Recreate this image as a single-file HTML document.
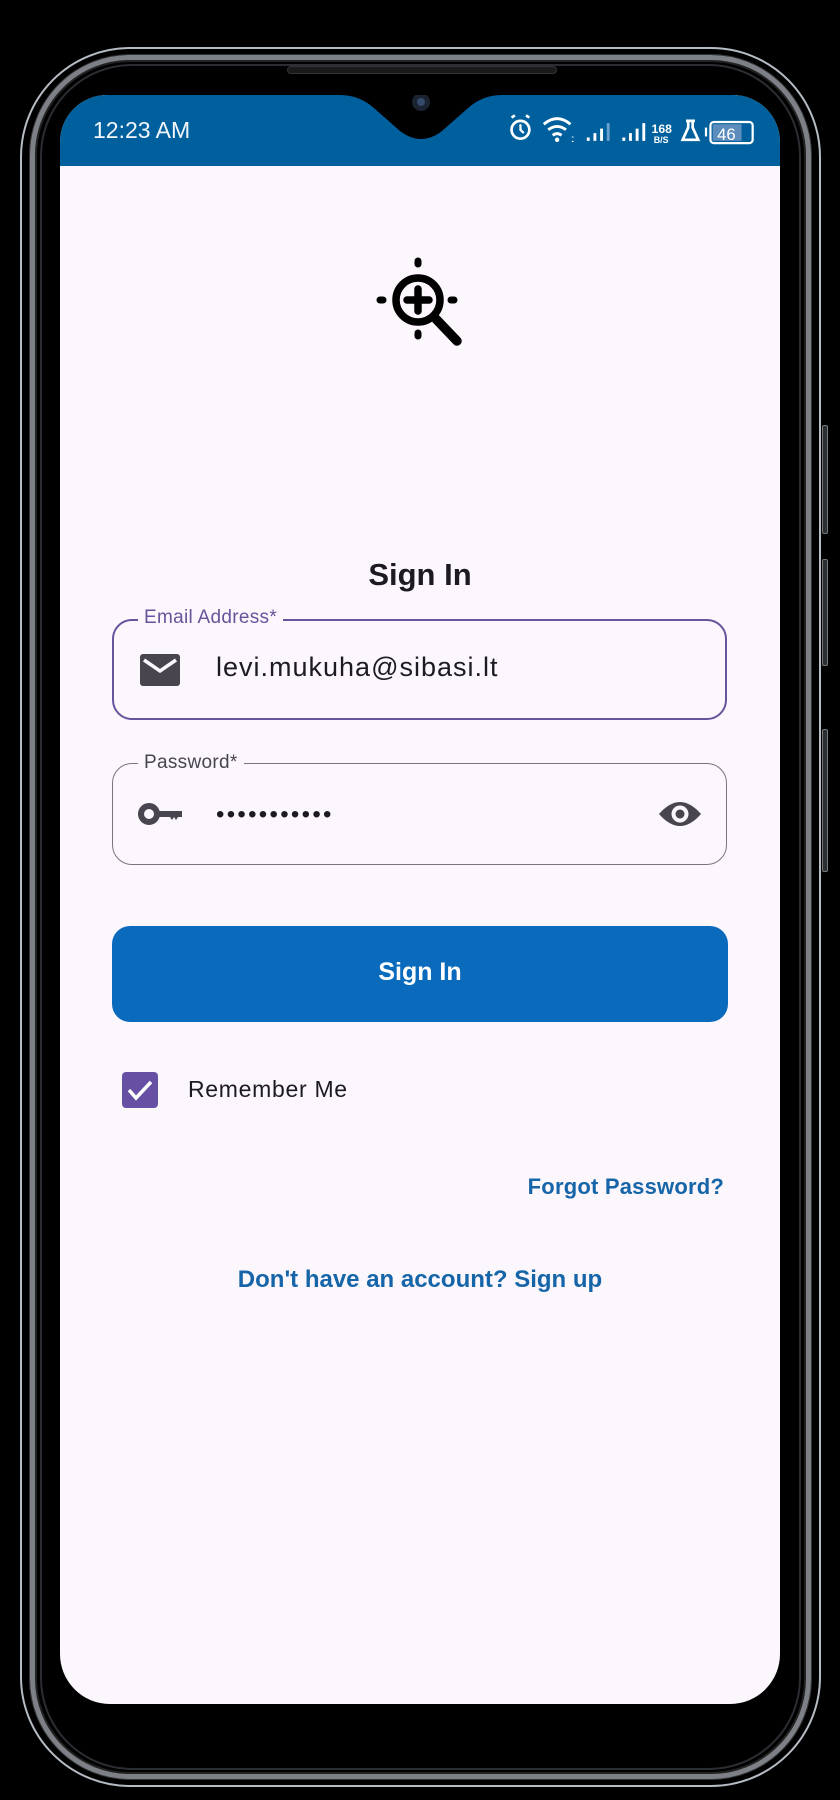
<!DOCTYPE html>
<html><head><meta charset="utf-8">
<style>
*{margin:0;padding:0;box-sizing:border-box}
html,body{width:840px;height:1800px;background:#000;overflow:hidden;font-family:"Liberation Sans",Roboto,sans-serif}
.abs{position:absolute}
#frame1{left:20px;top:47px;width:801px;height:1740px;border:2px solid #b5bcc4;border-radius:110px}
#frame2{left:30px;top:55px;width:781px;height:1724px;border:5px solid #7d8187;border-radius:100px;box-shadow:inset 0 0 0 2px #222, 0 0 0 1px #333}
#frame3{left:40px;top:64px;width:761px;height:1706px;border:2px solid #2a2d31;border-radius:92px}
#screen{left:60px;top:95px;width:720px;height:1609px;background:#fcf6fd;border-radius:47px 47px 50px 50px;overflow:hidden}
#bar{left:0;top:0;width:720px;height:71px;background:#00609e}
.btn{left:822px;width:6px;background:#2a2f35;border:1px solid #777;border-radius:2px}
.t{position:absolute;white-space:nowrap}
</style></head><body>
<div class="abs" id="frame1"></div>
<div class="abs" id="frame2"></div>
<div class="abs" id="frame3"></div>
<div class="abs btn" style="top:425px;height:109px"></div>
<div class="abs btn" style="top:559px;height:107px"></div>
<div class="abs btn" style="top:729px;height:143px"></div>
<div class="abs" style="left:287px;top:66px;width:270px;height:8px;background:#1a1a1a;border-radius:4px;border:1px solid #333"></div>

<div class="abs" id="screen">
  <div class="abs" id="bar"></div>
  <svg class="abs" style="left:0;top:0" width="720" height="60" viewBox="0 0 720 60">
    <path d="M280 0 Q300 0 315 14 L340 36 Q361 52 382 36 L407 14 Q422 0 442 0 Z" fill="#000"/>
    <circle cx="361" cy="7" r="9" fill="#1b2330"/><circle cx="361" cy="7" r="4" fill="#334a6a"/>
  </svg>
  <div class="t" style="left:33px;top:22px;font-size:23px;color:#f2f6fa">12:23 AM</div>
  <svg class="abs" style="left:446px;top:17px" width="300" height="40" viewBox="0 0 270 36" fill="none" stroke="#fff">
    <circle cx="13" cy="16" r="8" stroke-width="2.4"/><path d="M13 11v5l3 3" stroke-width="2"/><path d="M5 5l3-2M21 5l-3-2" stroke-width="2.4"/>
    <path d="M34 11q12-10 24 0M38 16q8-6 16 0M42 21q4-3 8 0" stroke-width="2.6"/><circle cx="46" cy="25" r="2" fill="#fff" stroke="none"/>
    <path d="M60 22v1M60 26v1" stroke-width="1.5"/>
    <path d="M74 26v-3M80 26v-7M86 26v-11" stroke-width="2.6"/><path d="M92 26v-16" stroke="#6aa0cf" stroke-width="2.6"/>
    <path d="M106 26v-3M112 26v-7M118 26v-11M124 26v-16" stroke-width="2.6"/>
    <text x="131" y="19" font-size="11" font-weight="bold" fill="#fff" stroke="none" font-family="Liberation Sans">168</text>
    <text x="133" y="28" font-size="8" font-weight="bold" fill="#fff" stroke="none" font-family="Liberation Sans">B/S</text>
    <path d="M162 8h8M164 8v6l-5 11h14l-5-11v-6" stroke-width="2.4"/>
    <path d="M180 14v8" stroke-width="2"/>
    <rect x="184" y="9" width="38" height="19" rx="3" stroke-width="2"/><rect x="186" y="11" width="26" height="15" fill="#5d8dbd" stroke="none"/>
    <text x="190" y="25" font-size="15" fill="#fff" stroke="none" font-family="Liberation Sans">46</text>
  </svg>

  <svg class="abs" style="left:300px;top:155px" width="120" height="110" viewBox="300 155 120 110">
    <g transform="translate(-60,-95)">
    <circle cx="418" cy="300" r="22" fill="none" stroke="#000" stroke-width="7.5"/>
    <path d="M418 289v22M407 300h22" stroke="#000" stroke-width="7.5" stroke-linecap="round"/>
    <path d="M436 319l21 22" stroke="#000" stroke-width="9.5" stroke-linecap="round"/>
    <path d="M418 261v3M418 333v3M380 300h3M451 300h3" stroke="#000" stroke-width="7" stroke-linecap="round"/>
    </g>
  </svg>

  <div class="t" style="left:0;width:720px;text-align:center;top:462px;font-size:31px;font-weight:bold;color:#1d1b20">Sign In</div>

  <div class="abs" style="left:52px;top:524px;width:615px;height:101px;border:2.5px solid #65559b;border-radius:20px"></div>
  <div class="t" style="left:78px;top:512px;padding:0 6px;background:#fcf6fd;font-size:19px;color:#65559b;letter-spacing:0.3px">Email Address*</div>
  <svg class="abs" style="left:80px;top:559px" width="40" height="32" viewBox="0 0 40 32"><rect width="40" height="32" rx="3" fill="#49454f"/><path d="M4 6l16 11 16-11" fill="none" stroke="#fcf6fd" stroke-width="3.5"/></svg>
  <div class="t" style="left:156px;top:557px;font-size:27px;color:#1d1b20;letter-spacing:1px">levi.mukuha@sibasi.lt</div>

  <div class="abs" style="left:52px;top:668px;width:615px;height:102px;border:1.5px solid #79747e;border-radius:20px"></div>
  <div class="t" style="left:78px;top:657px;padding:0 6px;background:#fcf6fd;font-size:19px;color:#49454f;letter-spacing:0.3px">Password*</div>
  <svg class="abs" style="left:78px;top:707px" width="46" height="26" viewBox="0 0 46 26"><circle cx="11" cy="12" r="8" fill="none" stroke="#49454f" stroke-width="6"/><path d="M18 9h26v6h-4l-2 3-2-3-2 3-2-3h-14z" fill="#49454f"/></svg>
  <div class="t" style="left:156px;top:706px;font-size:24px;color:#1d1b20;letter-spacing:2.3px">•••••••••••</div>
  <svg class="abs" style="left:597px;top:703px" width="46" height="32" viewBox="0 0 46 32"><path d="M2 16Q23-8 44 16Q23 40 2 16Z" fill="#49454f"/><circle cx="23" cy="16" r="8.5" fill="#fcf6fd"/><circle cx="23" cy="16" r="4.5" fill="#49454f"/></svg>

  <div class="abs" style="left:52px;top:831px;width:616px;height:96px;background:#0a6bbd;border-radius:18px"></div>
  <div class="t" style="left:52px;width:616px;text-align:center;top:863px;font-size:25px;font-weight:bold;color:#fff">Sign In</div>

  <div class="abs" style="left:62px;top:977px;width:36px;height:36px;background:#6750a4;border-radius:4px"></div>
  <svg class="abs" style="left:62px;top:977px" width="36" height="36"><path d="M7 18l7 8 15-16" fill="none" stroke="#fff" stroke-width="3.5"/></svg>
  <div class="t" style="left:128px;top:981px;font-size:23px;color:#1d1b20;letter-spacing:0.7px">Remember Me</div>

  <div class="t" style="right:56px;top:1079px;font-size:22px;font-weight:bold;color:#1565a8;letter-spacing:0.2px">Forgot Password?</div>
  <div class="t" style="left:0;width:720px;text-align:center;top:1171px;font-size:24px;font-weight:bold;color:#1565a8">Don't have an account? Sign up</div>
</div>
</body></html>
